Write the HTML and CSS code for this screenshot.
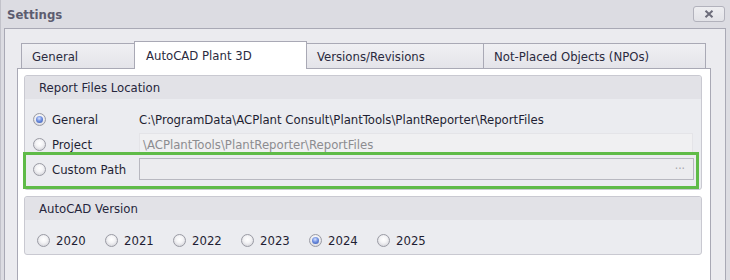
FILE: index.html
```html
<!DOCTYPE html>
<html lang="en">
<head>
    <meta charset="UTF-8">
    <title>Settings</title>
    <link rel="stylesheet" href="styles.css">
</head>
<body>

    <div class="window">
        <div class="titlebar">
            <span class="title">Settings</span>
            <button class="close">
                <svg width="10" height="8" viewBox="0 0 10 8">
                    <path d="M1.5 0.8 L8.5 7.2 M8.5 0.8 L1.5 7.2" stroke="#6c6c7a" stroke-width="2" fill="none"/>
                </svg>
            </button>
        </div>

        <div class="client">
            <div class="tabs">
                <div class="tab tab-general">General</div>
                <div class="tab tab-plant active">AutoCAD Plant 3D</div>
                <div class="tab tab-versions">Versions/Revisions</div>
                <div class="tab tab-npo">Not-Placed Objects (NPOs)</div>
            </div>

            <div class="page">
                <div class="group">
                    <div class="group-header">Report Files Location</div>
                    <div class="group-body">
                        <div class="row">
                            <label class="option"><span class="radio checked"></span>General</label>
                            <span class="path">C:\ProgramData\ACPlant Consult\PlantTools\PlantReporter\ReportFiles</span>
                        </div>
                        <div class="row">
                            <label class="option"><span class="radio"></span>Project</label>
                            <div class="box box-readonly">\ACPlantTools\PlantReporter\ReportFiles</div>
                        </div>
                        <div class="row">
                            <label class="option"><span class="radio"></span>Custom Path</label>
                            <div class="box box-edit"><span class="dots">&middot;&middot;&middot;</span></div>
                        </div>
                    </div>
                    <span class="highlight"></span>
                </div>

                <div class="group group-version">
                    <div class="group-header">AutoCAD Version</div>
                    <div class="group-body versions">
                        <label class="version"><span class="radio"></span>2020</label>
                        <label class="version"><span class="radio"></span>2021</label>
                        <label class="version"><span class="radio"></span>2022</label>
                        <label class="version"><span class="radio"></span>2023</label>
                        <label class="version"><span class="radio checked"></span>2024</label>
                        <label class="version"><span class="radio"></span>2025</label>
                    </div>
                </div>
            </div>
        </div>
    </div>

</body>
</html>
```

FILE: styles.css
```css
* {
    box-sizing: border-box;
}

body {
    margin: 0;
    width: 730px;
    height: 280px;
    overflow: hidden;
    font-family: 'DejaVu Sans Condensed', 'DejaVu Sans', sans-serif;
    font-stretch: condensed;
    font-size: 13px;
    color: #1f1f33;
}

.window {
    width: 730px;
    height: 280px;
    display: flex;
    flex-direction: column;
    background: #dcdce2;
    border-left: 1px solid #c2c2ca;
    padding: 0 4px 0 3px;
}

.titlebar {
    height: 28px;
    display: flex;
    align-items: center;
    justify-content: space-between;
    padding-left: 3px;
}

.title {
    font-weight: bold;
    font-size: 13px;
    color: #5c5c70;
}

.close {
    width: 32px;
    height: 16px;
    margin: 0 1px 0 0;
    padding: 0;
    display: flex;
    align-items: center;
    justify-content: center;
    border: 1px solid #b2b2bc;
    border-radius: 3px;
    background: linear-gradient(#eeeef1, #e2e2e7);
}

.client {
    flex: 1;
    display: flex;
    flex-direction: column;
    background: #ebebef;
    border: 1px solid #a9a9b5;
    border-bottom: none;
    padding: 12px 14px 0 12px;
}

.tabs {
    display: flex;
    align-items: flex-end;
    height: 27px;
    margin-left: 4px;
}

.tab {
    height: 25px;
    display: flex;
    align-items: center;
    padding-left: 10px;
    margin-left: -1px;
    border: 1px solid #a9a9b5;
    border-bottom: none;
    background: linear-gradient(#f0f0f3, #e4e4e9);
    color: #2a2a3e;
    white-space: nowrap;
}

.tab-general {
    width: 114px;
    margin-left: 0;
}

.tab-plant {
    width: 173px;
}

.tab-versions {
    width: 178px;
}

.tab-npo {
    width: 223px;
}

.tab.active {
    position: relative;
    z-index: 1;
    height: 28px;
    margin-bottom: -1px;
    padding-left: 11px;
    padding-bottom: 1px;
    background: #fff;
}

.page {
    flex: 1;
    background: #fff;
    border: 1px solid #a9a9b5;
    border-bottom: none;
    padding: 6px 8px 0 6px;
}

.group {
    position: relative;
    border: 1px solid #c9c9d1;
    border-radius: 3px;
    background: #ebecf0;
}

.group-version {
    margin-top: 6px;
}

.group-header {
    height: 23px;
    display: flex;
    align-items: center;
    padding-left: 14px;
    background: #e2e2e7;
    border-radius: 3px 3px 0 0;
    color: #26263c;
}

.group-body {
    padding: 8px 7px 8px 8px;
    display: flex;
    flex-direction: column;
    gap: 1px;
}

.row {
    height: 24px;
    display: flex;
    align-items: center;
}

.option {
    width: 106px;
    flex: none;
    display: flex;
    align-items: center;
    gap: 6px;
}

.radio {
    position: relative;
    width: 13px;
    height: 13px;
    flex: none;
    border-radius: 50%;
    border: 1px solid #9a9ba4;
    background: radial-gradient(circle at 50% 40%, #ffffff 0%, #f4f4f6 40%, #c9c9d0 100%);
}

.radio.checked::after {
    content: "";
    position: absolute;
    left: 2px;
    top: 2px;
    width: 7px;
    height: 7px;
    border-radius: 50%;
    background: radial-gradient(circle at 45% 35%, #d6e2ff 0%, #6f8fe0 45%, #2f50a8 100%);
}

.path {
    white-space: nowrap;
}

.box {
    flex: 1;
    height: 22px;
    display: flex;
    align-items: center;
    white-space: nowrap;
}

.box-readonly {
    margin-right: 1px;
    padding-left: 3px;
    background: #f0f0f2;
    border: 1px solid #e4e4e8;
    color: #8c8c90;
}

.box-edit {
    justify-content: flex-end;
    padding-right: 8px;
    background: #ececef;
    border: 1px solid #b8b8c0;
    color: #a4a4aa;
}

.dots {
    font-size: 12px;
}

.highlight {
    position: absolute;
    top: 76px;
    left: -2px;
    width: 676px;
    height: 37px;
    border: 3px solid #5fbb48;
}

.versions {
    flex-direction: row;
    height: 34px;
    padding: 6px 0 0 12px;
    align-items: center;
}

.version {
    width: 67px;
    display: flex;
    align-items: center;
    gap: 6px;
}
```
